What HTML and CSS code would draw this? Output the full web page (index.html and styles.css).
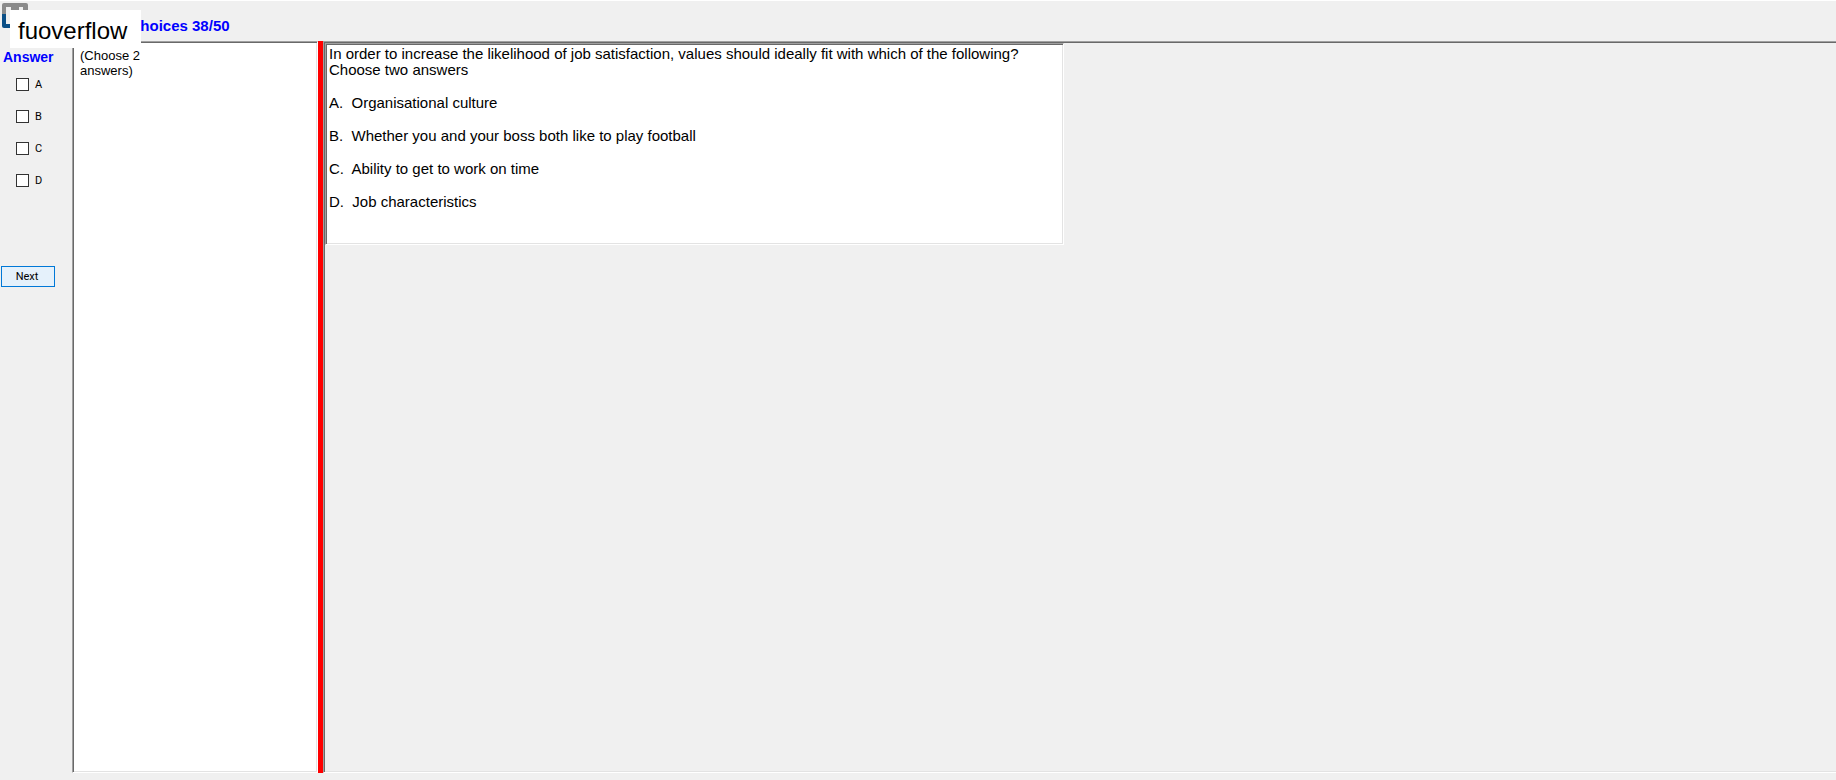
FILE: index.html
```html
<!DOCTYPE html>
<html lang="en">
<head>
    <meta charset="UTF-8">
    <meta name="viewport" content="width=device-width, initial-scale=1.0">
    <title>choices 38/50</title>
    <link rel="stylesheet" href="styles.css">
</head>
<body>
    <header class="header">
        <svg class="logo" width="26" height="26" viewBox="0 0 26 26" aria-hidden="true">
            <path fill="#8b8b8b" d="M2 0H24Q26 0 26 2V11H0V2Q0 0 2 0Z"/>
            <path fill="#0b4f86" d="M0 11H26V22Q26 25 23 25H2Q0 25 0 23Z"/>
            <path fill="#efefef" d="M4 4H9V10H17V4H21V21H4Z"/>
        </svg>
        <h1 class="title">choices 38/50</h1>
        <div class="watermark">fuoverflow</div>
    </header>

    <main class="exam">
        <form class="answers">
            <h2 class="answers-title">Answer</h2>
            <label class="choice"><input type="checkbox" name="answer" value="A">A</label>
            <label class="choice"><input type="checkbox" name="answer" value="B">B</label>
            <label class="choice"><input type="checkbox" name="answer" value="C">C</label>
            <label class="choice"><input type="checkbox" name="answer" value="D">D</label>
            <button class="next" type="button">Next</button>
        </form>

        <aside class="hint">
            <p>(Choose 2 answers)</p>
        </aside>

        <div class="divider"></div>

        <section class="viewer">
            <article class="question">
                <p>In order to increase the likelihood of job satisfaction, values should ideally fit with which of the following?<br>Choose two answers</p>
                <p>A.&nbsp; Organisational culture</p>
                <p>B.&nbsp; Whether you and your boss both like to play football</p>
                <p>C.&nbsp; Ability to get to work on time</p>
                <p>D.&nbsp; Job characteristics</p>
            </article>
        </section>
    </main>
</body>
</html>
```
FILE: styles.css
```css
* {
    box-sizing: border-box;
}
body {
    display: flex;
    flex-direction: column;
    height: 100vh;
    margin: 0;
    padding-bottom: 7px;
    overflow: hidden;
    background: #f0f0f0;
    color: #000;
    font-family: "Liberation Sans", Arial, sans-serif;
}
h1, h2, p {
    margin: 0;
}
.header {
    position: relative;
    display: flex;
    gap: 104px;
    height: 41px;
    padding: 2px 2px 0;
    border-top: 1px solid #fff;
}
.title {
    padding-top: 14px;
    color: #00f;
    font-size: 15px;
    line-height: 18px;
}
.watermark {
    position: absolute;
    top: 9px;
    left: 10px;
    padding: 3px 14px 0 8px;
    background: #fff;
    font-size: 24px;
    line-height: 35px;
}
.exam {
    display: flex;
    flex: 1;
    min-height: 0;
}
.answers {
    width: 72px;
    padding-top: 8px;
}
.answers-title {
    padding-left: 3px;
    margin-bottom: 3px;
    color: #00f;
    font-size: 14px;
    line-height: 16px;
}
.choice {
    display: flex;
    align-items: center;
    gap: 6px;
    height: 32px;
    padding-left: 16px;
    font-family: Roboto, sans-serif;
    font-size: 11px;
}
.choice input {
    appearance: none;
    width: 13px;
    height: 13px;
    margin: 0;
    border: 1px solid #333;
    background: #fff;
}
.choice input:checked {
    background: #0078d7;
}
.next {
    display: block;
    width: 54px;
    height: 21px;
    margin: 70px 0 0 1px;
    padding: 0 2px 0 0;
    border: 1px solid #0078d7;
    background: #e5f1fb;
    color: #000;
    font-family: Roboto, sans-serif;
    font-size: 11px;
}
/* sunken 3D frame */
.hint,
.viewer,
.question {
    border: 1px solid;
    border-color: #a0a0a0 #fff #fff #a0a0a0;
    box-shadow: inset 1px 1px #696969, inset -1px -1px #e3e3e3;
}
.hint {
    width: 246px;
    padding: 6px 170px 6px 7px;
    background: #fff;
    font-size: 13px;
    line-height: 15px;
}
.divider {
    width: 5px;
    background: #f00;
}
/* open on the right, runs on to the window edge */
.viewer {
    flex: 1;
    padding: 1px;
    border-right: none;
    box-shadow: inset 1px 1px #696969, inset 0 -1px #e3e3e3;
}
.question {
    width: 739px;
    max-width: 100%;
    min-height: 202px;
    padding: 2px 3px;
    background: #fff;
    font-size: 15px;
    line-height: 16px;
}
.question p {
    margin-bottom: 17px;
}
```
